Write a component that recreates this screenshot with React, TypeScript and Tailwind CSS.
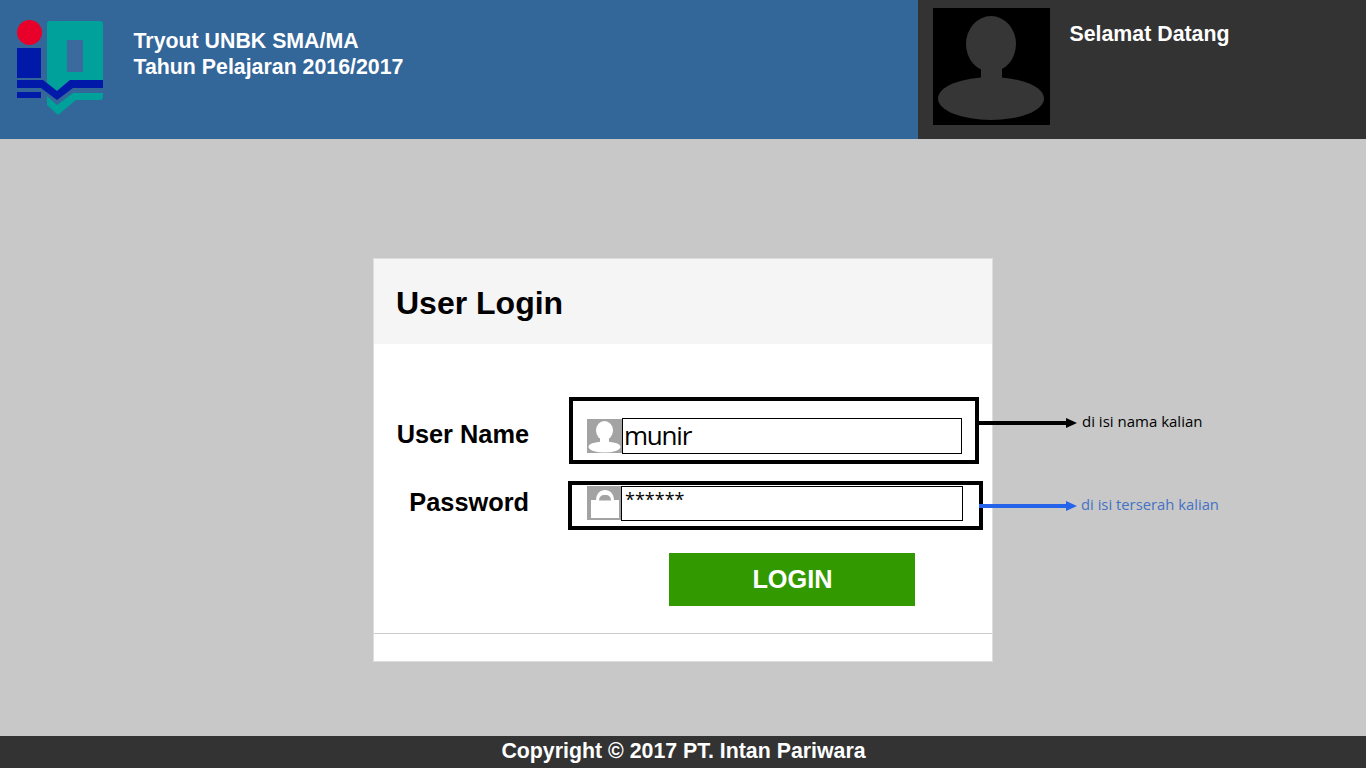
const Logo = () => (
  <svg width="90" height="100" viewBox="15 18 90 100" className="ml-[15px] mt-[18px] shrink-0">
    <path d="M47 24a3 3 0 0 1 3-3h50a3 3 0 0 1 3 3v56H70L57 91l-10-8z" fill="#00a19a" />
    <rect x="67" y="40" width="16" height="32" fill="#3b6b9e" />
    <circle cx="29.5" cy="32.5" r="12.5" fill="#e8002a" />
    <rect x="17" y="48" width="24" height="30" fill="#0019a8" />
    <path d="M47 96l10 9 16-12h30v4a3 3 0 0 1-3 3H76l-18 15-11-10z" fill="#00a19a" />
    <path d="M17 80h26l14 11 13-11h33v8H73l-16 12-16-12H17z" fill="#0019a8" />
    <rect x="17" y="92" width="24" height="6" fill="#0019a8" />
  </svg>
);

const Avatar = () => (
  <svg width="117" height="117" viewBox="0 0 117 117" className="shrink-0">
    <rect width="117" height="117" fill="#000" />
    <ellipse cx="58" cy="36" rx="25" ry="28" fill="#363636" />
    <rect x="48" y="58" width="21" height="20" fill="#363636" />
    <ellipse cx="58" cy="90.5" rx="53" ry="21.5" fill="#363636" />
  </svg>
);

const UserIcon = () => (
  <svg width="35" height="34" viewBox="0 0 35 34" className="shrink-0 mt-px">
    <rect width="35" height="34" fill="#a3a3a3" />
    <ellipse cx="17.5" cy="11.5" rx="8.5" ry="9.5" fill="#fff" />
    <rect x="13" y="18" width="9" height="8" fill="#fff" />
    <ellipse cx="17.5" cy="28" rx="16" ry="5.5" fill="#fff" />
  </svg>
);

const LockIcon = () => (
  <svg width="35" height="34" viewBox="0 0 35 34" className="shrink-0">
    <rect width="35" height="34" fill="#a3a3a3" />
    <rect x="4" y="14" width="28" height="18" fill="#fff" />
    <path d="M9 14.5C9 8 13 4 18 4s9 4 9 10.5z" fill="#fff" />
    <path d="M12 14.5C12 11 14 9 18 9s6 2 6 5.5z" fill="#a3a3a3" />
  </svg>
);

const Arrow = ({ width, color }: { width: number; color: string }) => (
  <svg width={width} height="10" viewBox={`0 0 ${width} 10`} className="block">
    <rect x="0" y="3" width={width - 8} height="4" fill={color} />
    <path d={`M${width - 11} 0L${width} 5L${width - 11} 10z`} fill={color} />
  </svg>
);

export default function App() {
  return (
    <div className="h-screen flex flex-col bg-[#c8c8c8] font-['Liberation_Sans',Arial,sans-serif] overflow-hidden">
      {/* Header */}
      <header className="h-[139px] flex shrink-0">
        <div className="w-[918px] bg-[#336699] flex">
          <Logo />
          <div className="ml-[28.5px] mt-[28px] text-white font-bold text-[21.33px] leading-[26px]">
            <div>Tryout UNBK SMA/MA</div>
            <div>Tahun Pelajaran 2016/2017</div>
          </div>
        </div>
        <div className="flex-1 bg-[#333333] flex pl-[15px] pt-2">
          <div>
            <Avatar />
          </div>
          <div className="ml-[19.5px] mt-[13px] text-white font-bold text-[21.33px] leading-[26px]">Selamat Datang</div>
        </div>
      </header>

      {/* Card */}
      <main className="flex-1 flex justify-center">
        <div className="w-[620px] h-[404px] mt-[119px] bg-white border border-[#dddddd] flex flex-col">
          <div className="h-[85px] bg-[#f5f5f5] pl-[22px] pt-[3px] flex items-center">
            <h1 className="text-[32px] font-bold text-black">User Login</h1>
          </div>

          <div className="pl-[22px] pt-[53px] flex-1">
            <div className="flex items-start">
              <label className="w-[133px] pt-[22px] text-right text-[25.33px] leading-[30px] font-bold text-black whitespace-nowrap">User Name</label>
              <div className="ml-[40px] w-[410px] h-[67px] border-4 border-black flex items-start pt-[17px] pl-[14px] relative">
                <UserIcon />
                <div className="w-[340px] h-[36px] border border-black text-[26px] tracking-[-1.2px] leading-[32px] pl-[1px] font-['Open_Sans',sans-serif] text-black">munir</div>
                <div className="absolute left-full top-[17px]">
                  <Arrow width={102} color="#000000" />
                </div>
                <span className="absolute left-[509px] top-[9px] text-[15px] whitespace-nowrap font-['Open_Sans',sans-serif] text-black">di isi nama kalian</span>
              </div>
            </div>

            <div className="flex items-start mt-[17px]">
              <label className="w-[133px] pt-[6px] text-right text-[25.33px] leading-[30px] font-bold text-black whitespace-nowrap">Password</label>
              <div className="ml-[39px] w-[415px] h-[49px] border-4 border-black flex items-start pt-px pl-[15px] relative">
                <LockIcon />
                <div className="w-[342px] h-[35px] border border-black -ml-px text-[18px] leading-[24px] pl-[3px] font-['Open_Sans',sans-serif] text-black">******</div>
                <div className="absolute left-full top-[16px]">
                  <Arrow width={98} color="#2563eb" />
                </div>
                <span className="absolute left-[509px] top-[8px] text-[14.8px] whitespace-nowrap font-['Open_Sans',sans-serif] text-[#4472c4]">di isi terserah kalian</span>
              </div>
            </div>

            <button type="button" className="block ml-[273px] mt-[23px] w-[246px] h-[53px] pl-px bg-[#339900] text-white font-bold text-[25.33px]">
              LOGIN
            </button>
          </div>

          <div className="h-[28px] border-t border-[#cccccc]" />
        </div>
      </main>

      {/* Footer */}
      <footer className="h-[32px] pl-px bg-[#333333] text-white font-bold text-[21.33px] leading-[30px] text-center shrink-0">
        Copyright © 2017 PT. Intan Pariwara
      </footer>
    </div>
  );
}
